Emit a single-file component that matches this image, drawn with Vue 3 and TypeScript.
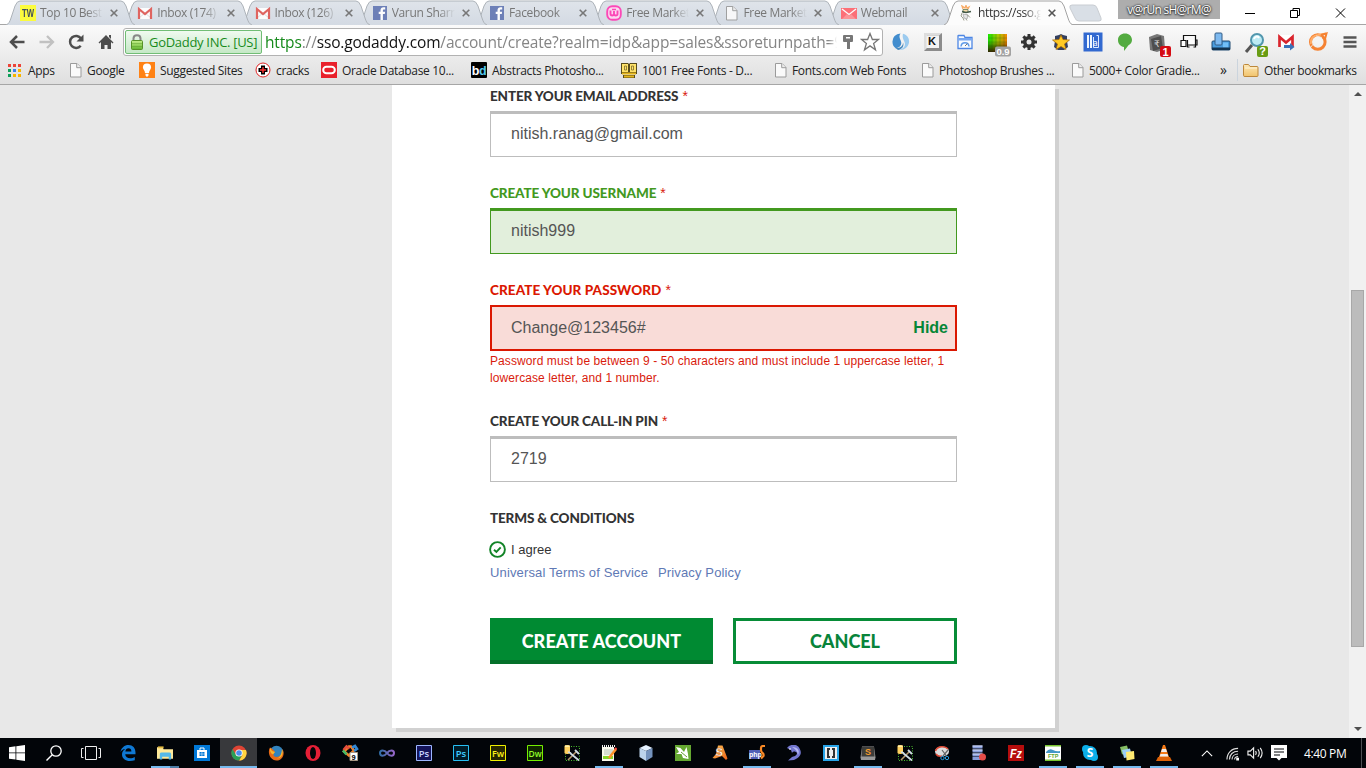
<script setup lang="ts">
import { ref } from 'vue'

interface Tab { icon: string; title: string; close?: boolean }
interface Task { icon: string; state?: 'open' | 'active' | 'stack' }

const tabs: Tab[] = [
  { icon: 'tw', title: 'Top 10 Best' },
  { icon: 'gmail', title: 'Inbox (174)' },
  { icon: 'gmail', title: 'Inbox (126)' },
  { icon: 'fb', title: 'Varun Sharm' },
  { icon: 'fb', title: 'Facebook' },
  { icon: 'wamp', title: 'Free Market' },
  { icon: 'page', title: 'Free Market' },
  { icon: 'mail', title: 'Webmail' },
]
const extensions = ['swirl', 'kkey', 'gauge', 'palette', 'gear', 'star', 'book', 'balloon', 'rupee', 'screens', 'devices', 'lens', 'gmailgo', 'ring', 'menu']
const bookmarks = [
  { icon: 'apps', label: 'Apps', cls: 'b-apps' },
  { icon: 'page', label: 'Google', cls: 'b-page' },
  { icon: 'bulb', label: 'Suggested Sites', cls: '' },
  { icon: 'cross', label: 'cracks', cls: '' },
  { icon: 'oracle', label: 'Oracle Database 10...', cls: '' },
  { icon: 'bd', label: 'Abstracts Photosho...', cls: '' },
  { icon: 'fonts', label: '1001 Free Fonts - D...', cls: '' },
  { icon: 'page', label: 'Fonts.com Web Fonts', cls: 'b-page' },
  { icon: 'page', label: 'Photoshop Brushes ...', cls: 'b-page' },
  { icon: 'page', label: '5000+ Color Gradie...', cls: 'b-page' },
]
const tasks: Task[] = [
  { icon: 'win' }, { icon: 'search' }, { icon: 'taskview' }, { icon: 'edge' },
  { icon: 'explorer', state: 'stack' }, { icon: 'store' }, { icon: 'chrome', state: 'active' },
  { icon: 'firefox' }, { icon: 'opera' }, { icon: 'puzzle' }, { icon: 'infinity' },
  { icon: 'ps1' }, { icon: 'ps2' }, { icon: 'fw' }, { icon: 'dw' }, { icon: 'tools' },
  { icon: 'notepad', state: 'open' }, { icon: 'cube' }, { icon: 'corel' }, { icon: 'swish' },
  { icon: 'php', state: 'open' }, { icon: 'dolphin' }, { icon: 'brackets' },
  { icon: 'sublime', state: 'open' }, { icon: 'tools' }, { icon: 'snip' }, { icon: 'dbred' },
  { icon: 'filezilla' }, { icon: 'ftp', state: 'open' }, { icon: 'skype', state: 'open' },
  { icon: 'notes', state: 'open' }, { icon: 'vlc', state: 'open' },
]

const email = ref('nitish.ranag@gmail.com')
const username = ref('nitish999')
const password = ref('Change@123456#')
const pin = ref('2719')
</script>

<template>
  <div class="screen">
    <svg class="paints" aria-hidden="true">
      <defs>
        <linearGradient id="g-tab" x1="0" y1="0" x2="0" y2="1"><stop offset="0" stop-color="#dfe4ea" /><stop offset="1" stop-color="#d3dae3" /></linearGradient>
        <linearGradient id="g-lock" x1="0" y1="0" x2="0" y2="1"><stop offset="0" stop-color="#c5ef8b" /><stop offset="1" stop-color="#62b52e" /></linearGradient>
        <linearGradient id="g-folder" x1="0" y1="0" x2="0" y2="1"><stop offset="0" stop-color="#fde8b6" /><stop offset="1" stop-color="#f1c36c" /></linearGradient>
        <linearGradient id="g-pal" x1="0" y1="0" x2="1" y2="0"><stop offset="0" stop-color="#12ed00" /><stop offset=".5" stop-color="#a8d000" /><stop offset="1" stop-color="#f88a00" /></linearGradient>
        <linearGradient id="g-paldark" x1="0" y1="0" x2="0" y2="1"><stop offset="0" stop-color="#200" stop-opacity="0" /><stop offset=".4" stop-color="#300" stop-opacity=".12" /><stop offset="1" stop-color="#300" stop-opacity=".85" /></linearGradient>
        <linearGradient id="g-inf" x1="0" y1="0" x2="1" y2="0"><stop offset="0" stop-color="#316da5" /><stop offset="1" stop-color="#9766c9" /></linearGradient>
        <linearGradient id="g-or" x1="0" y1="0" x2="1" y2="1"><stop offset="0" stop-color="#ffc45b" /><stop offset="1" stop-color="#ed6014" /></linearGradient>
      </defs>
    </svg>
    <svg class="sprite" aria-hidden="true">
      <symbol id="tw" viewBox="0 0 16 16"><path fill="#ffff2f" d="M0 0h16v16H0z" /><text x="8" y="12.3" font-size="11" font-weight="700" font-family="Liberation Sans" text-anchor="middle" textLength="12" lengthAdjust="spacingAndGlyphs" fill="#344252">TW</text></symbol>
      <symbol id="gmail" viewBox="0 0 16 16"><path fill="#fff" d="M1 3h14v11H1z" /><path fill="none" stroke="#ddd" d="m2 13 6-5 6 5" /><path fill="none" stroke="#e05a55" stroke-width="2.2" d="M2 14V4l6 5 6-5v10" /></symbol>
      <symbol id="fb" viewBox="0 0 16 16"><path fill="#6478b4" d="M1 1h14v14H1z" /><path fill="#fff" d="M8.5 15V9H6.7V6.7h1.8V5.2c0-2 1.2-3 3-3h1.7v2.3h-1.2c-.9 0-1.1.4-1.1 1.1v1.1h2.2L12.800 9h-1.900v6z" /></symbol>
      <symbol id="wamp" viewBox="0 0 16 16"><rect x="1.200" y="1.200" width="13.600" height="13.600" rx="5" fill="#ffd9f2" stroke="#ff3db4" stroke-width="1.900" /><path d="M4.500 5.500v3.300q0 1.700 1.700 1.700T8 8.800V6v2.800q0 1.700 1.800 1.700t1.700-1.700V5.500" fill="none" stroke="#ff3db4" stroke-width="1.900" /><path d="M6 4.500h4" stroke="#ff3db4" stroke-width="1.500" /></symbol>
      <symbol id="page" viewBox="0 0 16 16"><path fill="#fafafa" stroke="#9b9b9b" d="M2.500 1.500h6.500l4 4v9.500H2.500z" /><path fill="#eee" stroke="#9b9b9b" d="M8.700 1.500v4.200H13" /></symbol>
      <symbol id="mail" viewBox="0 0 16 16"><path fill="#ff666e" d="M0 3h16v11H0z" /><path d="m1 4 7 5.500L15 4" fill="none" stroke="#fff" stroke-width="1.300" /><path fill="#ff8e91" d="M1 14 6 9l2 1.500L10 9l5 5z" /></symbol>
      <symbol id="daddy" viewBox="0 0 16 16"><path stroke="#f7a45a" stroke-width="1.300" fill="none" d="M5 4 4 1l3 2 1-2.500 1 2.500 2-1-1 2" /><path d="M5 4.500h5v3H5z" fill="#f6d9a5" stroke="#557148" stroke-width=".800" /><path d="m4 6.500 4 1 5-1" fill="none" stroke="#334b37" stroke-width="1.300" /><path d="m5 9 5 1-1 4-3-1z" fill="#e5e5e5" stroke="#999" stroke-width=".700" /><path d="M4 8l-1 3 2 2 1 2.500m3-6 3 3M8 14l1 1.500" fill="none" stroke="#8b8b76" stroke-width=".900" /></symbol>
      <symbol id="swirl" viewBox="0 0 18 18"><path fill="#428dce" d="M8.500.500A8 8 0 0 0 .500 9.200c0 2.500 1.200 4.600 3.200 6 3-.200 6-2.500 5.500-6C8.800 6.500 6 4 8.500.500z" /><path fill="#9ccbef" d="M11 .800c4.200 1 6.700 4.900 6 9-1 4.500-5 7.600-9.500 7.200 4.500-1.500 6.500-4.500 5-8-1-2.500-2.500-4.500-1.500-8.200z" /><path fill="#4789bf" d="M3.500 15c4 .500 7.500-1.500 7.500-5.500 1.500 3.500-1 7-5 7.500z" /></symbol>
      <symbol id="kkey" viewBox="0 0 18 18"><path fill="#8b8b8b" d="M0 0h18v18H0z" /><path fill="#ddd" d="M0 0h18l-3 2.500H3V15l-3 3z" /><path fill="#f3f3f3" d="M2.500 2.500h12.500V15H2.500z" /><text x="4" y="12" font-family="Liberation Sans" font-size="11" font-weight="700" fill="#111">K</text></symbol>
      <symbol id="gauge" viewBox="0 0 16 16"><path d="M1 4.500V2q0-.500.500-.500h5.500l1 2h7V14.500H1z" fill="#f7fbff" stroke="#4d86e4" stroke-width="1.300" /><path fill="#77a7f1" d="M1.500 4h13v2.500h-13z" /><path fill="none" stroke="#5f9be9" stroke-width="1.500" d="M4 12.500c.500-5 7.500-5 8 0" /><path stroke="#777" d="m8 12 2.500-2.500" /></symbol>
      <symbol id="palette" viewBox="0 0 24 24"><path fill="url(#g-pal)" d="M1 1h19v18H1z" /><path fill="url(#g-paldark)" d="M1 1h19v18H1z" /><path stroke="#050" stroke-opacity=".2" d="M5 1v18M9 1v18M13 1v18M17 1v18M1 5h19M1 9h19M1 13h19" /><rect x="8" y="13.500" width="16" height="10" rx="2" fill="#a2a2a2" /><text x="16" y="22" text-anchor="middle" font-size="9.500" font-weight="700" font-family="Liberation Sans" fill="#fff">0.9</text></symbol>
      <symbol id="gear" viewBox="0 0 18 18"><g fill="#333"><path d="M7.500 1h3v16h-3z" /><path d="M7.500 1h3v16h-3z" transform="rotate(45 9 9)" /><path d="M7.500 1h3v16h-3z" transform="rotate(90 9 9)" /><path d="M7.500 1h3v16h-3z" transform="rotate(135 9 9)" /><circle cx="9" cy="9" r="6" /></g><circle cx="9" cy="9" r="2.500" fill="#e9e9e9" /></symbol>
      <symbol id="star" viewBox="0 0 18 18"><path fill="#34405f" d="m3 3 4-1 2-1 2 1 4 1v5l1 6-4 3H6l-4-3 1-6z" /><path d="m9 2 2 4.500 6.500.5-5 4L14 16.500 9 13.500 4 16.500l1.500-5.500-5-4L7 6.500z" fill="#ffc924" stroke="#a56708" stroke-width=".700" /></symbol>
      <symbol id="book" viewBox="0 0 20 20"><path fill="#3269d0" d="M.500.500h19v19H.500z" /><path fill="#eff6ff" d="M4 3h2v13H4zm3 0h2v13H7z" /><path fill="none" stroke="#dceaff" d="M10.500 5v10.500h5V3.500h-2" /><text x="10" y="14" fill="#fff" font-size="9" font-family="Lato">a</text></symbol>
      <symbol id="balloon" viewBox="0 0 18 18"><path fill="#53ab40" d="M9 .500c4 0 7 2.700 7 6.500 0 3-2.200 4.500-3.500 5.300L8 18v-4C4.500 13.500 2 11 2 7 2 3 5 .500 9 .500z" /></symbol>
      <symbol id="rupee" viewBox="0 0 24 24"><path fill="#777" d="m2 4 8-3 7 2 1 13-8 3-7-2z" /><path fill="#4e4e4e" d="m4 6 10-3 2 12-10 3z" /><text x="7" y="14" font-size="9" fill="#ddd" font-family="DejaVu Sans">₹</text><rect x="13" y="13" width="11" height="11" rx="2" fill="#d50b13" /><text x="18.500" y="22.500" text-anchor="middle" font-size="11" font-weight="700" font-family="Liberation Sans" fill="#fff">1</text></symbol>
      <symbol id="screens" viewBox="0 0 18 18"><path fill="#f8f8f8" stroke="#111" stroke-width="1.200" d="M3.500 7.500v-5h12v5" /><path fill="#fff" stroke="#111" stroke-width="1.200" d="M1 7.500h5v6H1z" /><path fill="#fff" stroke="#111" stroke-width="1.200" d="M15.500 7v5h-8V7m0 5v2h2m6-2v2h-2M16 7h1v5h-1" /></symbol>
      <symbol id="devices" viewBox="0 0 20 20"><rect x="1" y="9" width="18" height="9" rx="1" fill="#4a9ddf" stroke="#214b70" /><rect x="4" y="1" width="7" height="12" rx="1" fill="#7db9ef" stroke="#345d85" /><path d="M12 10.500h5v5h-5" fill="#72bff7" /><path fill="#143450" d="M1 15.500h18V18H1z" /></symbol>
      <symbol id="lens" viewBox="0 0 24 24"><path stroke="#555" stroke-width="3" d="m8 12-6 7" /><circle cx="13" cy="7" r="6" fill="#bcebf4" stroke="#5196ad" stroke-width="2" /><path d="M10 6c1-3 4-3 5-1" fill="none" stroke="#fff" stroke-width="2" /><rect x="13" y="13" width="11" height="11" rx="2" fill="#689c14" /><text x="18.500" y="22.300" text-anchor="middle" font-size="11" font-weight="700" font-family="Liberation Sans" fill="#fff">?</text></symbol>
      <symbol id="gmailgo" viewBox="0 0 18 18"><path fill="#fff" d="M1 2h16v12H1z" /><path fill="none" stroke="#d9252d" stroke-width="2.700" d="M2.500 14V4L9 9.500 15.500 4v10" /><path d="M7 12h6v-2l4.500 4-4.500 3.500V15H7z" fill="#3a72b8" /></symbol>
      <symbol id="ring" viewBox="0 0 20 20"><circle cx="9.800" cy="10" r="7.300" fill="none" stroke="#f58232" stroke-width="3" /><path fill="none" stroke="#ffac67" stroke-width="1.800" d="M3 12C2 6 6 3.500 10 3l8-1.500" /><path fill="none" stroke="#f58232" stroke-width="2" d="M13 3l5.500-1.500L17 7" /><path stroke="#eee" stroke-width=".800" d="m3 15 3-4M8 4l6 1.500" fill="none" /></symbol>
      <symbol id="menu" viewBox="0 0 16 16"><path stroke="#555" stroke-width="2.600" d="M1.500 3.500h13M1.500 8h13M1.500 12.500h13" /></symbol>
      <symbol id="apps" viewBox="0 0 13 13"><path fill="#ec4438" d="M0 0h3v3H0zm5 0h3v3H5zm5 0h3v3h-3z" /><path fill="#0d9f59" d="M0 5h3v3H0zm0 5h3v3H0z" /><path fill="#3c80ec" d="M5 5h3v3H5z" /><path fill="#f8b500" d="M10 5h3v3h-3zM5 10h3v3H5zm5 0h3v3h-3z" /></symbol>
      <symbol id="bulb" viewBox="0 0 16 16"><path fill="#ff8215" d="M0 0h16v16H0z" /><path fill="#fff" d="M8 1.500a4.100 4.100 0 0 1 4.100 4.100c0 2-2 2.900-2.100 5.400H6c0-2.500-2.100-3.400-2.100-5.400A4.100 4.100 0 0 1 8 1.500zM6.500 11.700h3v1.800L8 15l-1.500-1.500z" /></symbol>
      <symbol id="cross" viewBox="0 0 16 16"><circle cx="8" cy="8" r="7" fill="#fff" stroke="#e02424" /><path fill="#000" d="M6 3.500h4V6h2.500v4H10v2.500H6V10H3.500V6H6z" /><path stroke="#f33" stroke-width="1.400" d="M8 5v6M5 8h6" /></symbol>
      <symbol id="oracle" viewBox="0 0 16 16"><path fill="#e9202b" d="M0 0h16v16H0z" /><rect x="2.200" y="4.800" width="11.600" height="6.500" rx="3.250" fill="none" stroke="#fff" stroke-width="2" /></symbol>
      <symbol id="bd" viewBox="0 0 16 16"><rect width="16" height="16" rx="1" /><text x="8" y="12.500" text-anchor="middle" font-size="12.500" font-weight="700" font-family="Liberation Sans" fill="#fff">b<tspan fill="#54caf0">d</tspan></text></symbol>
      <symbol id="fonts" viewBox="0 0 16 16"><path fill="#574b1d" d="M0 1h7l1 1 1-1h7v11H0zM2 13h12v3H2z" /><path fill="#ffe36a" d="M1 2h6v8H1zm8 0h6v8H9z" /><path fill="none" stroke="#7e6c2d" stroke-width=".800" d="M3.500 4v4h2V4zm7 0h2v4h-2z" /><path stroke="#e5b519" stroke-width="2" d="M1 11.500h14M3 14.500h10" /></symbol>
      <symbol id="folder" viewBox="0 0 16 16"><path fill="url(#g-folder)" stroke="#bd873a" d="M.500 3.500q0-1 1-1h4l1.500 2h7q1 0 1 1v8q0 1-1 1h-12q-1.500 0-1.500-1z" /><path stroke="#fff3d5" d="M2 6h12" /></symbol>
      <symbol id="win" viewBox="0 0 16 16"><path fill="#fff" d="m0 2.200 6.500-.9v6.200H0zm7.300-1L16 0v7.500H7.300zM0 8.300h6.500v6.300L0 13.700zm7.300 0H16V16l-8.700-1.300z" /></symbol>
      <symbol id="search" viewBox="0 0 16 16"><circle cx="10" cy="6" r="5.200" fill="none" stroke="#fff" stroke-width="1.300" /><path stroke="#fff" stroke-width="1.400" d="M6.300 9.700.500 15.500" /></symbol>
      <symbol id="taskview" viewBox="0 0 20 16"><path fill="none" stroke="#eee" d="M4.500 1.500h11v13h-11zM2.500 3.500h-2v9h2m15-9h2v9h-2" /></symbol>
      <symbol id="edge" viewBox="0 0 16 16"><path fill="#0f78d3" d="M.5 7C1.200 2.700 4.500 0 8.500 0c4.300 0 7 3 7 7.500v1.800H5.200c.2 2.600 2.300 3.900 5 3.900 1.800 0 3.300-.500 4.600-1.300v3.300C13.300 15.800 11.500 16 9.800 16 5.500 16 2 13.600 2 9.500 2 7 3.200 5 5.300 4 2.900 4.300 1.500 5.300.5 7zm4.900-.6h6c0-2-1.100-3.100-2.900-3.100-1.700 0-2.800 1.200-3.100 3.100z" /></symbol>
      <symbol id="explorer" viewBox="0 0 17 16"><path fill="#ffe999" d="M0 2h6l1 2h10v10H0z" /><path fill="#e5bb43" d="M1 1h6v2H1z" /><path fill="#55b9e9" d="M3 15V9q0-1.500 2-1.500h8q2 0 2 1.500v6h-2.500v-3h-7v3z" /></symbol>
      <symbol id="store" viewBox="0 0 16 16"><path fill="#0078d7" d="M0 0h16v16H0z" /><path fill="#fff" d="M3 5h10v8H3z" /><path fill="none" stroke="#fff" d="M6 5V3h4v2" /><path fill="#0078d7" d="M5.500 7h2.200v1.800H5.500zm2.700 0h2.300v1.800H8.200zM5.500 9.300h2.200V11H5.500zm2.700 0h2.300V11H8.200z" /></symbol>
      <symbol id="chrome" viewBox="0 0 16 16"><circle cx="8" cy="8" r="7.500" fill="#de4434" /><path fill="#ffd440" d="M8 5h7a7.500 7.500 0 0 1-7 10.500l3.500-5.500z" /><path fill="#299f57" d="M1.500 4A7.500 7.500 0 0 0 8 15.500L11 10H5z" /><circle cx="8" cy="8" r="3.600" fill="#fff" /><circle cx="8" cy="8" r="2.800" fill="#4b8ded" /></symbol>
      <symbol id="firefox" viewBox="0 0 16 16"><circle cx="8.500" cy="7.500" r="6.800" fill="#3283bd" /><path fill="#e86a16" d="M2 2.500c-3 5 .200 13 6.500 13 6 0 8.800-6.500 6-11.500.200 5-2.500 8-6 8S4.500 8.500 7 7L4.500 4z" /><path fill="#f6b72e" d="M14 4c2 4.500-.500 9.500-5 9.500 3-.800 4.500-4 5-9.500M2 3l2 3 3 1-2 2.500C2.500 8.500 1.700 6 2 3" /></symbol>
      <symbol id="opera" viewBox="0 0 16 16"><ellipse cx="8" cy="8" rx="7.500" ry="8" fill="#e51f36" /><ellipse cx="8" cy="8" rx="3" ry="6" fill="#020509" /></symbol>
      <symbol id="puzzle" viewBox="0 0 18 18"><path fill="none" stroke="#f78328" stroke-width="2.600" d="M8 2.500 3 7.500l5 4 5-5-3-4z" /><path stroke="#e44d3b" stroke-width="2.600" fill="none" d="m2.500 6 3-3.500 3 2" /><path stroke="#42ba66" stroke-width="2.600" d="m2 6.500 3.500 4" /><path stroke="#3389d5" stroke-width="2.600" fill="none" d="m11 3.500 3-1.500 2 3-3 2" /><path fill="#fff" stroke="#a69784" d="M9 8.500h7.500v8H9z" /><text x="10.500" y="15.500" font-size="7.500" font-weight="700" font-family="Liberation Sans">9</text></symbol>
      <symbol id="infinity" viewBox="0 0 16 16"><path fill="none" stroke="url(#g-inf)" stroke-width="2" d="M8 8C5.500 4.500 1 4.500 1 8s4.500 3.500 7 0 7-3.500 7 0-4.500 3.500-7 0z" /></symbol>
      <symbol id="ps1" viewBox="0 0 16 16"><path fill="#14145a" stroke="#9db6ff" d="M.500.500h15v15H.500z" /><text x="8" y="11.500" text-anchor="middle" font-size="9.500" font-weight="600" fill="#c4d3ff" font-family="Open Sans">Ps</text></symbol>
      <symbol id="ps2" viewBox="0 0 16 16"><path fill="#001c28" stroke="#27bff3" d="M.500.500h15v15H.500z" /><text x="8" y="11.500" text-anchor="middle" font-size="9.500" font-weight="600" fill="#3dccff" font-family="Open Sans">Ps</text></symbol>
      <symbol id="fw" viewBox="0 0 16 16"><path fill="#272800" stroke="#eff000" d="M.500.500h15v15H.500z" /><text x="8" y="11.500" text-anchor="middle" font-size="9" font-weight="600" fill="#fff31b" font-family="Open Sans">Fw</text></symbol>
      <symbol id="dw" viewBox="0 0 16 16"><path fill="#102500" stroke="#75ef00" d="M.500.500h15v15H.500z" /><text x="8" y="11.500" text-anchor="middle" font-size="8.500" font-weight="600" fill="#93ff28" font-family="Open Sans">Dw</text></symbol>
      <symbol id="tools" viewBox="0 0 16 16"><path fill="none" stroke="#47ba2d" stroke-dasharray="1 1.500" d="M7 1.500h8.500v14H1.500V9" /><path fill="#ffd15f" d="M.500 1q0-1 2.800-1T6 1v7q0 1-2.700 1T.500 8z" /><path fill="#fff0ad" d="M1 .500h4.500v1.500H1z" /><path stroke="#b99a6e" stroke-width="1.600" d="m4 15 8-8" /><path stroke="#cfdce4" stroke-width="1.800" fill="none" d="m6 8 9 7.500M11 5l4 4M4 7l3 1" /></symbol>
      <symbol id="notepad" viewBox="0 0 16 16"><path fill="#f9f9ed" d="M1 2h12v14H1z" /><path stroke="#eee" stroke-dasharray="1 1" stroke-width="2" d="M1 1h14" /><path stroke="#b4c1b7" d="M3 5h9M3 7h9M3 9h9" /><path stroke="#87d52b" stroke-width="3" d="M2 12.500h10" /><path stroke="#ff9329" stroke-width="2.500" d="m8 13 7-9" /><path stroke="#f44" stroke-width="2" d="m14 3 1.500 1.500" /></symbol>
      <symbol id="cube" viewBox="0 0 16 16"><path fill="#e5f1ff" d="m8 0 6.500 3L8 6 1.500 3z" /><path fill="#bcd4ec" d="m1.500 3 6.500 3v10l-6.500-4z" /><path fill="#7493bd" d="m14.500 3-6.500 3v10l6.500-4z" /></symbol>
      <symbol id="corel" viewBox="0 0 16 16"><path fill="#65a831" d="M0 0h16v16H0z" /><path fill="#fff" d="m1 2 4.500 1L9 7l2.500-5 1.500 7 .500 5L8 13l-1.500-4L1 9l3-2z" /><path stroke="#66a132" d="m6 7 6 5" /></symbol>
      <symbol id="swish" viewBox="0 0 16 16"><path fill="url(#g-or)" d="M6 .500h4.500l5 13L14 15l-4-4-7 2.500L.500 13 4 9z" /><text x="3.500" y="10.500" font-size="11" font-weight="700" font-family="Liberation Sans" fill="#fff" stroke="#b75c16" stroke-width=".3">S</text></symbol>
      <symbol id="php" viewBox="0 0 16 16"><path fill="#5260b5" d="M0 5h11v9H0z" /><text x="0" y="12" font-size="7" font-weight="700" font-family="Liberation Sans" fill="#fff">php</text><path d="M16 1h-2q-2 0-2 2v2q0 2 1.500 3t1 3L12 13.500" stroke="#f98925" stroke-width="2.200" fill="none" /></symbol>
      <symbol id="dolphin" viewBox="0 0 16 16"><path fill="#7377cf" d="M1 3c3-4 9-4.500 12-.500 4 6 1 10-5 12.500l-6 .500 4-3.500c4-1 5-2.500 5-4-1.500-2-4-2-5 0L5 5z" /><path fill="#b5b8f2" d="M6 2c6 0 8 4 6 8-.500-4-3-6-6-8" /><path fill="#fff" d="M3 3.500h2v1H3z" /></symbol>
      <symbol id="brackets" viewBox="0 0 16 16"><path fill="#28a5e9" d="M0 0h16v16H0z" /><path fill="#eee" d="M2 2h12v12H2z" /><path fill="none" stroke="#333" stroke-width="2" d="M7 4H5v8h2m2-8h2v8H9" /></symbol>
      <symbol id="sublime" viewBox="0 0 16 16"><path fill="#999" d="m2 1.500 12 0 1.500 11-.500 2.500H1l-.500-2.500z" /><path fill="#3d3d3a" d="M2 2h12l.500 9.500h-13z" /><text x="8" y="10.300" text-anchor="middle" font-family="Liberation Sans" font-size="9" font-weight="700" fill="#f49c2d">S</text></symbol>
      <symbol id="snip" viewBox="0 0 16 16"><ellipse cx="8" cy="6.500" rx="7" ry="5" fill="#ddd" /><path stroke="#df4934" stroke-width="1.600" fill="none" d="M1.500 6C3 1 11 .500 14 4M2 9q2 3 6 2" /><path stroke="#666" stroke-width="1.200" d="m9 11 5-6M8 5l4.500 6" /><circle cx="8.500" cy="13" r="1.700" fill="none" stroke="#289bdd" /><circle cx="13" cy="13" r="1.700" fill="none" stroke="#289bdd" /></symbol>
      <symbol id="dbred" viewBox="0 0 16 16"><path stroke="#879ddb" stroke-width="3" d="M1.500 2h10m-10 4h10m-10 4h10m-10 3.500h9" /><path stroke="#dbe4ff" d="M1.500 1h10m-10 4h10m-10 4h10" /><circle cx="11.500" cy="12" r="3.500" fill="#e54d49" /></symbol>
      <symbol id="filezilla" viewBox="0 0 16 16"><path fill="#b50d0d" d="M0 0h16v16H0z" /><text x="8" y="13" text-anchor="middle" font-size="13" font-weight="700" font-style="italic" font-family="Liberation Sans" fill="#fff" textLength="12" lengthAdjust="spacingAndGlyphs">Fz</text></symbol>
      <symbol id="ftp" viewBox="0 0 16 16"><path fill="#fff" d="M0 0h16v16H0z" /><path fill="#79c530" d="M0 0h16v1.500H0zm0 14.500h16V16H0z" /><path fill="#4396c7" d="M1 7q3-4 7-2t7 1v2H1z" /><text x="3" y="12.500" font-size="5.500" font-weight="700" font-family="Liberation Sans" fill="#61a530">FTP</text></symbol>
      <symbol id="skype" viewBox="0 0 16 16"><circle cx="8" cy="8" r="7" fill="#0caee8" /><circle cx="4" cy="4" r="4" fill="#0caee8" /><circle cx="12" cy="12" r="4" fill="#0caee8" /><text x="8" y="12.200" text-anchor="middle" font-size="12" font-weight="700" font-family="Open Sans" fill="#fff">S</text></symbol>
      <symbol id="notes" viewBox="0 0 16 16"><path fill="#85be65" d="m1 2 7-1.500 2 7-7 2z" /><path fill="#9bcdf5" d="m3 5 8-1.500 2 8-8 1.500z" /><path fill="#ffea72" d="m7 7 8-1 .500 8-8 1.500z" /></symbol>
      <symbol id="vlc" viewBox="0 0 16 16"><path fill="#f57a16" d="M7 0h2l4 12H3z" /><path fill="#eee" d="M6 4h4l1 3H5zm-1.500 5h7l.800 2.500H3.700z" /><path fill="#de6207" d="M2 12h12l2 4H0z" /></symbol>
    </svg>

    <header class="browser">
      <div class="strip">
        <div class="tabs">
          <div v-for="(t, i) in tabs" :key="i" class="tab" :style="{ zIndex: 20 - i }">
            <svg class="shape" viewBox="0 0 129 25"><path d="M0 25c3-1 4-4 5-7l4-12q2-5 5-5h101q3 0 5 5l4 12c1 3 2 6 5 7" fill="url(#g-tab)" stroke="#adb3b9" /></svg>
            <svg class="ico"><use :href="'#' + t.icon" /></svg><span class="title">{{ t.title }}</span>
            <svg class="x" viewBox="0 0 8 8"><path d="m.7.7 6.600 6.600m0-6.600L.7 7.300" stroke="#777" stroke-width="1.600" /></svg>
          </div>
          <div class="tab current">
            <svg class="shape" viewBox="0 0 129 25"><path d="M0 25c3-1 4-4 5-7l4-12q2-5 5-5h101q3 0 5 5l4 12c1 3 2 6 5 7" fill="#fcfcfc" stroke="#a3a3a3" /></svg>
            <svg class="ico"><use href="#daddy" /></svg><span class="title">https://sso.g</span>
            <svg class="x" viewBox="0 0 8 8"><path d="m.7.7 6.600 6.600m0-6.600L.7 7.300" stroke="#555" stroke-width="1.600" /></svg>
          </div>
        </div>
        <svg class="newtab" viewBox="0 0 34 18"><path d="M4 1h21q3 0 4 3l4 10q1 3-2 3H11q-3 0-4-3L2 4Q1 1 4 1z" fill="#d9dfe6" stroke="#c9cdd2" /></svg>
        <span class="user">v@rUn sH@rM@</span>
        <svg class="winctl" viewBox="0 0 104 24"><path fill="none" stroke="#000" d="M1 13.500h10M46.500 10.500h7v7h-7zM49 10V8.500h6.500v7H54M92 8.500l9 9m0-9-9 9" /></svg>
      </div>

      <div class="toolbar">
        <nav class="navs">
          <svg viewBox="0 0 16 16"><path fill="none" stroke="#4d4d4d" stroke-width="2.500" d="M15.500 8H2m6-6L2 8l6 6" /></svg>
          <svg viewBox="0 0 16 16"><path fill="none" stroke="#c1c1c1" stroke-width="2.300" d="M.500 8H14M8 2l6 6-6 6" /></svg>
          <svg viewBox="0 0 16 16"><path fill="none" stroke="#4d4d4d" stroke-width="2.500" d="M12.700 11.700A6 6 0 1 1 13 4.500" /><path fill="#4d4d4d" d="M15.500.500v7h-7z" /></svg>
          <svg viewBox="0 0 16 16"><path fill="#4d4d4d" d="m8 1 7.500 7.500-1 1L13 8v7H9.500v-4h-3v4H3V8L1.500 9.500l-1-1zM11 1h2v4l-2-2z" /></svg>
        </nav>
        <div class="omnibox">
          <span class="secure"><svg viewBox="0 0 14 16"><path fill="none" stroke="#888" stroke-width="2" d="M3.500 7V4.500C3.500 2 5 1.200 7 1.200s3.500 1 3.500 3.300V7" /><rect x="1.500" y="6.500" width="11" height="9" rx="1" fill="url(#g-lock)" stroke="#569127" /><path stroke="#4f9424" stroke-opacity=".4" d="M2 9.500h10M2 12.500h10" /></svg><span>GoDaddy INC. [US]</span></span>
          <span class="url"><em>https</em><i>://</i>sso.godaddy.com<i>/account/create?realm=idp&amp;app=sales&amp;ssoreturnpath=9</i></span>
          <svg class="key" viewBox="0 0 12 16"><path fill="#777" d="M2 1h8q1 0 1 1v5q0 1-1 1H8v7H5V8H2Q1 8 1 7V2q0-1 1-1z" /><path fill="#fff" d="M4 3h4v1.500H4z" /></svg>
          <svg class="fav" viewBox="0 0 20 20"><path fill="#fff" stroke="#777" stroke-width="1.300" d="m10 1.500 2.400 6h6.100l-4.900 4 1.900 6.300-5.500-3.900-5.500 3.900 1.900-6.300-4.900-4h6.100z" /></svg>
        </div>
        <div class="exts"><span v-for="e in extensions" :key="e" :class="['ext', 'e-' + e]"><svg><use :href="'#' + e" /></svg></span></div>
      </div>

      <div class="bookmarks">
        <div v-for="b in bookmarks" :key="b.label" :class="['bm', b.cls]"><svg><use :href="'#' + b.icon" /></svg><span>{{ b.label }}</span></div>
        <span class="more">»</span>
        <div class="bm other"><svg><use href="#folder" /></svg><span>Other bookmarks</span></div>
      </div>
    </header>

    <main class="page">
      <form class="card" @submit.prevent>
        <label class="field"><span class="lab">Enter your email address<b>*</b></span><input v-model="email" /></label>
        <label class="field ok"><span class="lab">Create your username<b>*</b></span><input v-model="username" /></label>
        <div class="field bad">
          <label class="lab" for="pw">Create your password<b>*</b></label>
          <div class="pw"><input id="pw" v-model="password" /><button type="button" class="hide">Hide</button></div>
          <p class="error">Password must be between 9 - 50 characters and must include 1 uppercase letter, 1<br>lowercase letter, and 1 number.</p>
        </div>
        <label class="field"><span class="lab">Create your call-in pin<b>*</b></span><input v-model="pin" /></label>
        <div class="lab terms">Terms &amp; conditions</div>
        <div class="agree"><svg viewBox="0 0 17 17"><circle cx="8.500" cy="8.500" r="7.400" fill="#fff" stroke="#128427" stroke-width="1.900" /><path fill="none" stroke="#128427" stroke-width="1.900" d="m5 8.700 2.400 2.200 4.300-4.600" /></svg><span>I agree</span></div>
        <div class="links"><a>Universal Terms of Service</a><a>Privacy Policy</a></div>
        <div class="buttons"><button class="create">CREATE ACCOUNT</button><button type="button" class="cancel">CANCEL</button></div>
      </form>
      <div class="scroll"><i class="up"></i><div class="thumb"></div><i class="down"></i></div>
    </main>

    <footer class="taskbar">
      <div class="tasks"><span v-for="(t, i) in tasks" :key="i" :class="['task', 't-' + t.icon, t.state]"><svg><use :href="'#' + t.icon" /></svg></span></div>
      <div class="tray">
        <svg class="chev" viewBox="0 0 14 8"><path fill="none" stroke="#fff" stroke-width="1.300" d="m1 7 6-6 6 6" /></svg>
        <svg class="wifi" viewBox="0 0 14 14"><g fill="none" stroke="#ddd" stroke-width="1.200"><path d="M1 13C1 6 6 1 13 1" /><path d="M3.700 13c0-5.500 3.800-9 9.300-9" /><path d="M6.500 13C6.500 9.500 9 7 13 7" /><path d="M9.300 13c0-2 1.500-3.200 3.700-3.200" /></g><path fill="#fff" d="M11 11h3v3h-3z" /></svg>
        <svg class="vol" viewBox="0 0 18 14"><path fill="none" stroke="#eee" stroke-width="1.200" d="M1 5h2.500L7 1.500v11L3.500 9H1zM9 5q1.500 2 0 4m2.500-6q3 4 0 8M14 1.500q4 5.500 0 11" /></svg>
        <svg class="act" viewBox="0 0 16 16"><path fill="#fff" d="M0 0h16v13h-5.500L8 15.500 5.500 13H0z" /><path stroke="#020509" stroke-width="1.200" d="M3 4h10M3 7h10M3 10h6" /></svg>
        <span class="time">4:40 PM</span><i class="desk"></i>
      </div>
    </footer>
  </div>
</template>

<style>
body { margin: 0; overflow: hidden; }
</style>
<style scoped>
.screen { width: 1366px; height: 768px; overflow: hidden; display: flex; flex-direction: column; position: relative; font-family: "Open Sans", "Noto Sans", sans-serif; font-size: 12px; color: #222; }
svg { display: block; flex: none; }
.paints { position: absolute; width: 0; height: 0; }
.sprite { display: none; }
.browser { height: 85px; flex: none; box-sizing: border-box; border-bottom: 1px solid #a6a6a6; background: linear-gradient(#fff 0 24px, #fafafa 25px, #dfdfdf 84px); }
.strip { height: 25px; display: flex; position: relative; box-sizing: border-box; border-bottom: 1px solid #a6a6a6; background: #fff; }
.tabs { display: flex; padding-left: 6px; width: 1061px; flex: none; }
.tab { width: 117.25px; height: 25px; flex: none; position: relative; display: flex; align-items: center; }
.shape { position: absolute; left: 0; top: 0; width: 129px; height: 25px; }
.ico { width: 16px; height: 16px; position: relative; margin: 1px 4px 0 14px; opacity: .92; }
.title { position: relative; width: 63px; overflow: hidden; white-space: nowrap; color: #777; font-size: 12px; line-height: 24px; letter-spacing: -.35px; mask-image: linear-gradient(90deg, #000 74%, transparent); }
.x { position: relative; width: 8px; height: 8px; margin: 1px 0 0 7px; }
.current { z-index: 30; }
.current .title { color: #333; }
.newtab { width: 34px; height: 18px; margin: 4px 0 0 1px; }
.user { margin-left: 16px; width: 102px; height: 19px; background: #adadad; color: #fff; text-align: center; line-height: 19px; font-size: 12px; letter-spacing: -.75px; text-shadow: 0 0 2px #333, 0 0 2px #333, 0 1px 2px #333; }
.winctl { width: 104px; height: 24px; margin-left: 24px; }
.toolbar { height: 34px; display: flex; align-items: center; }
.navs { width: 123px; flex: none; display: flex; padding: 0 0 0 9px; gap: 13.500px; box-sizing: border-box; }
.navs svg { width: 16px; height: 16px; }
.omnibox { width: 760px; height: 28px; flex: none; box-sizing: border-box; border: 1px solid #b2b2b2; border-radius: 3px; background: #fff; display: flex; align-items: center; padding-left: 1px; }
.secure { width: 137px; height: 24px; box-sizing: border-box; border: 1px solid #71bd75; border-radius: 2px; background: linear-gradient(#f0faf0, #c5e8c6); color: #188b1c; display: flex; align-items: center; padding-left: 4px; font-size: 13px; letter-spacing: -.3px; flex: none; white-space: nowrap; }
.secure svg { width: 14px; height: 16px; margin-right: 5px; }
.url { width: 572px; margin-left: 3px; overflow: hidden; white-space: nowrap; font-size: 15.500px; line-height: 25px; letter-spacing: -.15px; color: #111; mask-image: linear-gradient(90deg, #000 98.500%, transparent); }
.url em { font-style: normal; color: #168a1b; }
.url i { font-style: normal; color: #858585; }
.key { width: 12px; height: 16px; margin-left: 5px; }
.fav { width: 20px; height: 20px; margin-left: 6px; }
.exts { display: flex; padding-left: 2px; }
.ext { width: 32.060px; height: 28px; display: flex; align-items: center; justify-content: center; }
.ext svg { width: 18px; height: 18px; }
.e-gauge svg, .e-menu svg { width: 16px; height: 16px; }
.e-palette svg, .e-rupee svg, .e-lens svg { width: 24px; height: 24px; margin: 5px 0 0 4px; }
.e-book svg, .e-devices svg, .e-ring svg { width: 20px; height: 20px; }
.bookmarks { height: 22px; display: grid; grid-template-columns: 61px 71px 116px 66px 150px 150px 152px 147px 150px 147px 24px 1fr; padding-left: 7px; align-items: center; color: #222; }
.bm { display: flex; align-items: center; white-space: nowrap; letter-spacing: -.32px; }
.bm svg { width: 16px; height: 16px; margin-right: 5px; }
.b-apps svg { width: 13px; height: 13px; margin: 0 7px 0 1px; }
.b-page svg { margin-right: 3px; }
.more { font-size: 14px; line-height: 20px; padding-left: 3px; }
.other { border-left: 1px solid #cbd4dd; padding-left: 5px; height: 22px; margin-left: -4px; letter-spacing: -.4px; }
.page { height: 653px; flex: none; background: #e8e8e8; display: flex; justify-content: space-between; }
.card { margin: 0 0 0 392px; width: 663px; height: 643px; box-sizing: border-box; padding: 0 98px; background: #fff; box-shadow: 4px 4px 0 #d1d1d1; font-family: "Liberation Sans", Arial, sans-serif; }
.field { display: block; height: 97px; }
.lab { display: block; height: 26px; box-sizing: border-box; white-space: nowrap; text-transform: uppercase; font: 900 13.500px/23px Lato, sans-serif; letter-spacing: -.14px; color: #333; }
.lab b { font: 400 14px/20px "Liberation Sans", sans-serif; color: #d91b0d; margin-left: 4px; letter-spacing: 0; }
input { display: block; width: 467px; height: 46px; box-sizing: border-box; border: 1px solid #bdbdbd; border-top-width: 3px; border-radius: 0; outline: 0; padding: 0 20px 2px; background: #fff; font: 16px "Liberation Sans", Arial, sans-serif; color: #555; }
.ok .lab { color: #43991f; letter-spacing: -.1px; }
.ok input { border-color: #43991f; background: #e2efdc; }
.bad { height: 131px; }
.bad .lab { color: #db1802; letter-spacing: .08px; }
.bad input { border: 2px solid #db1802; background: #f9dcd8; padding: 0 19px 1px; }
.pw { position: relative; }
.hide { position: absolute; right: 9px; top: 10px; border: 0; background: none; padding: 0; color: #078637; font: 700 16px/25px "Liberation Sans", sans-serif; }
.error { margin: 2px 0 0; font-size: 12px; line-height: 17px; letter-spacing: .09px; color: #d91b0d; white-space: nowrap; }
.terms { height: 25px; }
.agree { display: flex; align-items: center; height: 17px; margin-top: 9px; font-size: 13px; color: #333; gap: 5px; }
.agree svg { width: 17px; height: 17px; margin-left: -1px; }
.links { display: flex; gap: 10px; margin-top: 6px; font-size: 13px; line-height: 17px; letter-spacing: .14px; color: #6079b5; }
.buttons { display: flex; gap: 20px; margin-top: 37px; }
.buttons button { width: 223px; height: 46px; box-sizing: border-box; padding: 0; font: 900 18px/22px Lato, sans-serif; white-space: nowrap; border-radius: 0; }
.buttons .create { border: 0; border-bottom: 4px solid #04702a; padding-top: 3px; background: #008a32; color: #fff; letter-spacing: .1px; }
.buttons .cancel { width: 224px; border: 3px solid #078c37; background: #fff; color: #08843a; }
.scroll { width: 17px; background: #f1f1f1; display: flex; flex-direction: column; align-items: center; }
.thumb { width: 13px; height: 357px; margin-top: 194px; background: #bcbcbc; box-sizing: border-box; border: 1px solid #a8a8a8; }
.up, .down { border: 4px solid transparent; width: 0; height: 0; }
.up { border-bottom-color: #505050; border-top: 0; margin-top: 7px; }
.down { border-top-color: #505050; border-bottom: 0; margin-top: 80px; }
.taskbar { height: 30px; background: #020509; display: flex; color: #fff; }
.tasks { display: flex; width: 1195px; margin-left: -2px; flex: none; }
.task { width: 37px; height: 30px; flex: none; display: flex; align-items: center; justify-content: center; position: relative; }
.task svg { width: 16px; height: 16px; }
.t-taskview svg { width: 20px; }
.t-puzzle svg { width: 18px; height: 18px; }
.open::after, .active::after, .stack::after { content: ""; position: absolute; height: 2px; width: 28px; left: 5px; bottom: 0; background: #76b9ed; }
.active { background: #38393c; }
.active::after { width: 37px; left: 0; }
.stack::after { background: linear-gradient(90deg, #76b9ed 19px, #4d7ca4 19px); }
.tray { display: flex; align-items: center; flex: 1; }
.chev { width: 12px; height: 7px; margin-left: 8px; }
.wifi { width: 13px; height: 14px; margin: 2px 0 0 13px; }
.vol { width: 17px; height: 14px; margin-left: 8px; }
.act { width: 16px; height: 16px; margin-left: 7px; }
.time { margin-left: 17px; width: 43px; white-space: nowrap; font-size: 12px; letter-spacing: -.35px; }
.desk { width: 1px; height: 30px; background: #4b4e52; margin-left: 14px; }
</style>
